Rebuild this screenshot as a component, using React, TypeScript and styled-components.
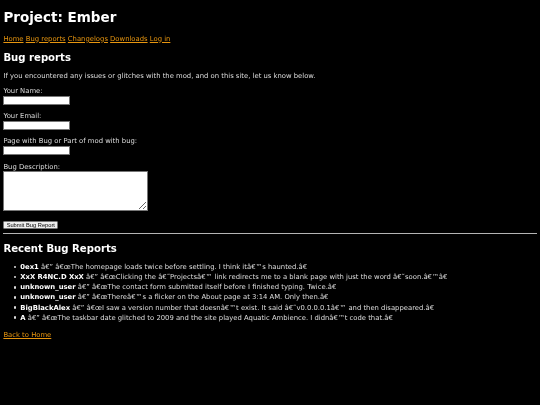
import React from "react";
import styled, { createGlobalStyle } from "styled-components";

const Global = createGlobalStyle`
  html, body { margin: 0; background: #000; }
`;
const Page = styled.div`
  zoom: 0.421875;
  box-sizing: border-box;
  height: 960px;
  overflow: hidden;
  padding: 8px;
  font-family: "DejaVu Sans", Verdana, sans-serif;
  font-size: 16.2px;
  line-height: 24px;
  color: #dedede;
  filter: blur(1.2px);
`;
const Title = styled.h1`
  margin: 8px 0 16px;
  font-size: 32px;
  line-height: 48px;
  font-weight: 700;
  color: #fff;
`;
const Nav = styled.nav`
  margin-bottom: 14px;
`;
const Link = styled.a`
  color: #e8960f;
  text-decoration: underline;
`;
const Heading = styled.h2`
  margin: 0;
  font-size: 24px;
  line-height: 36px;
  font-weight: 700;
  color: #fff;
`;
const Intro = styled.p`
  margin: 14px 0 11px;
`;
const Field = styled.div`
  display: flex;
  flex-direction: column;
  align-items: flex-start;
  margin-bottom: 15px;
`;
const TextInput = styled.input`
  box-sizing: border-box;
  width: 158px;
  height: 21px;
  padding: 0;
  border: 2px solid #767676;
  background: #fff;
`;
const TextArea = styled.textarea`
  box-sizing: border-box;
  display: block;
  width: 343px;
  height: 95px;
  padding: 0;
  margin: -2.4px 0 0;
  border: 2px solid #767676;
  background: #fff;
`;
const Submit = styled.button`
  display: block;
  box-sizing: border-box;
  margin: 24px 0 0;
  width: 130px;
  height: 20px;
  padding: 0;
  border: 2px solid #767676;
  border-radius: 3px;
  background: #efefef;
  color: #000;
  font-family: "Liberation Sans", Arial, sans-serif;
  font-size: 13.6px;
  line-height: 16px;
`;
const Rule = styled.hr`
  margin: 8.5px 0 17.5px;
  height: 2px;
  border: 0;
  background: #b4b4b4;
`;
const Reports = styled.ul`
  margin: 13.5px 0 0;
  padding: 0 0 0 40px;
  list-style: none;
`;
const Report = styled.li`
  position: relative;
  &::before {
    content: "";
    position: absolute;
    left: -15px;
    top: 9px;
    width: 6px;
    height: 6px;
    border-radius: 50%;
    background: #dedede;
  }
`;
const Reporter = styled.strong`
  font-weight: 700;
  color: #fff;
`;
const Back = styled.p`
  margin: 17px 0 0;
`;

const navItems = ["Home", "Bug reports", "Changelogs", "Downloads", "Log in"];

const reports: [string, string][] = [
  ["0ex1", "â€” â€œThe homepage loads twice before settling. I think itâ€™s haunted.â€\u009d"],
  ["XxX R4NC.D XxX", "â€” â€œClicking the â€˜Projectsâ€™ link redirects me to a blank page with just the word â€˜soon.â€™â€\u009d"],
  ["unknown_user", "â€” â€œThe contact form submitted itself before I finished typing. Twice.â€\u009d"],
  ["unknown_user", "â€” â€œThereâ€™s a flicker on the About page at 3:14 AM. Only then.â€\u009d"],
  ["BigBlackAlex", "â€” â€œI saw a version number that doesnâ€™t exist. It said â€˜v0.0.0.0.1â€™ and then disappeared.â€\u009d"],
  ["A", "â€” â€œThe taskbar date glitched to 2009 and the site played Aquatic Ambience. I didnâ€™t code that.â€\u009d"],
];

export default function App() {
  return (
    <Page>
      <Global />
      <Title>Project: Ember</Title>
      <Nav>
        {navItems.map((n) => (
          <React.Fragment key={n}>
            <Link href="#">{n}</Link>{" "}
          </React.Fragment>
        ))}
      </Nav>
      <Heading>Bug reports</Heading>
      <Intro>If you encountered any issues or glitches with the mod, and on this site, let us know below.</Intro>
      <form>
        <Field><label>Your Name:</label><TextInput /></Field>
        <Field><label>Your Email:</label><TextInput /></Field>
        <Field><label>Page with Bug or Part of mod with bug:</label><TextInput /></Field>
        <Field><label>Bug Description:</label><TextArea /></Field>
        <Submit type="button">Submit Bug Report</Submit>
      </form>
      <Rule />
      <Heading>Recent Bug Reports</Heading>
      <Reports>
        {reports.map(([who, text], i) => (
          <Report key={i}><Reporter>{who}</Reporter> {text}</Report>
        ))}
      </Reports>
      <Back><Link href="#">Back to Home</Link></Back>
    </Page>
  );
}
